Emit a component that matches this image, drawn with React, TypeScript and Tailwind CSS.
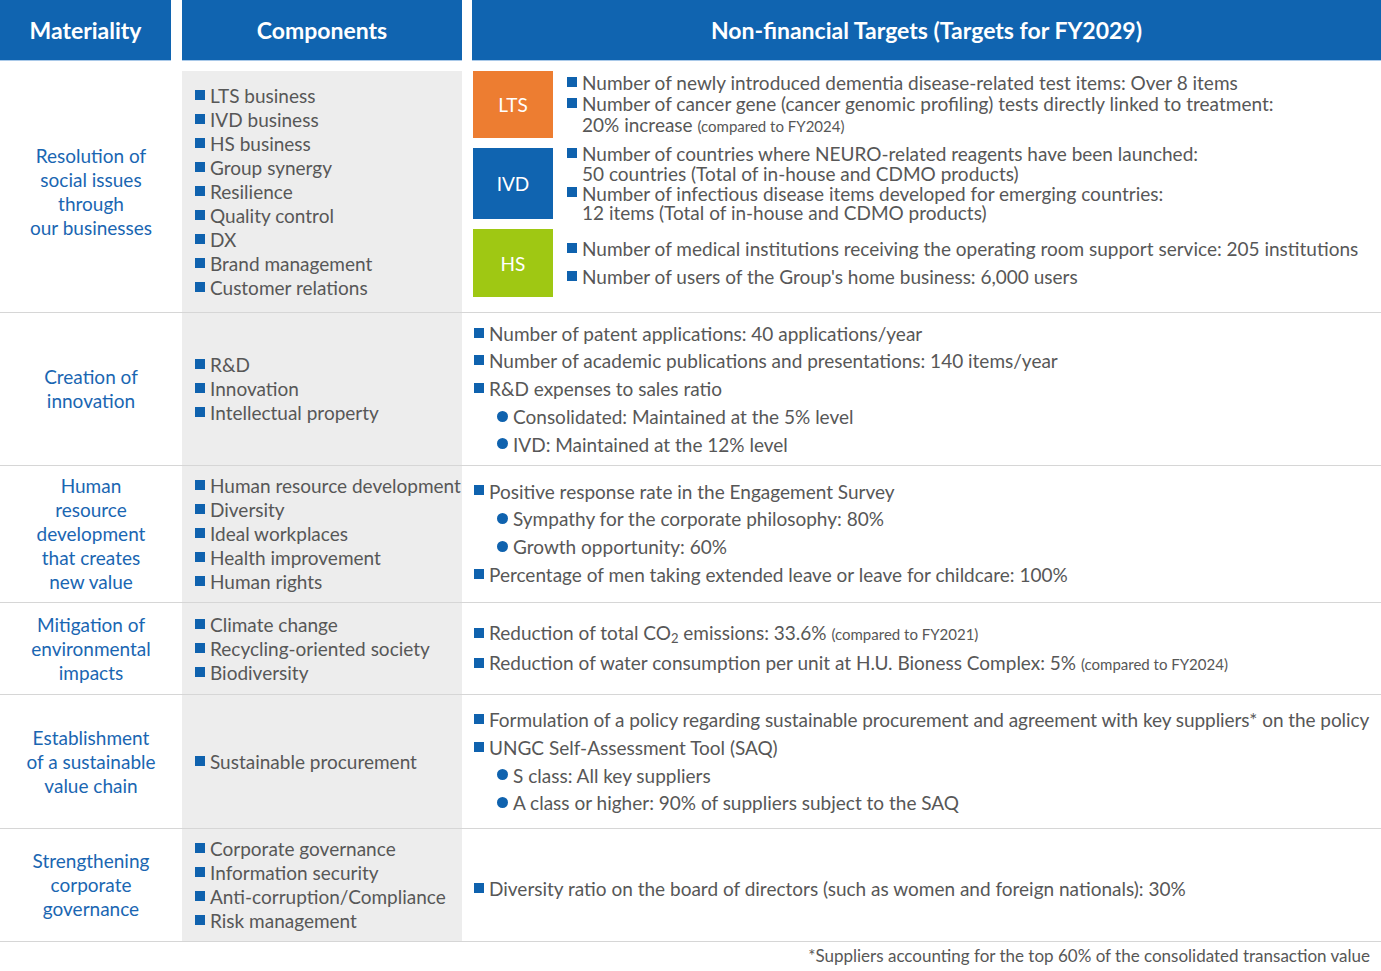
import React from "react";

const FONT = "font-['Lato','Open_Sans',sans-serif]";

function Sq() {
  return <span className="inline-block w-[10px] h-[10px] bg-[#0f62ae] mr-[5px] mb-[2px] shrink-0" />;
}

function Dot() {
  return <span className="inline-block w-[11px] h-[11px] rounded-full bg-[#0f62ae] mr-[5px] mb-[1px] shrink-0" />;
}

function Item({ children, sub = false }: { children: React.ReactNode; sub?: boolean }) {
  return (
    <div className={`flex items-center ${sub ? "pl-[23px]" : ""}`}>
      {sub ? <Dot /> : <Sq />}
      <span>{children}</span>
    </div>
  );
}

function Small({ children }: { children: React.ReactNode }) {
  return <span className="text-[15px]">{children}</span>;
}

function Components({ items }: { items: string[] }) {
  return (
    <div className="bg-[#ededed] h-full flex flex-col justify-center pl-[13px] leading-[24px]">
      {items.map((t) => (
        <div key={t} className="flex items-center">
          <Sq />
          <span>{t}</span>
        </div>
      ))}
    </div>
  );
}

function Row({
  h,
  title,
  items,
  right = "",
  children,
}: {
  h: string;
  title: string[];
  items: string[];
  right?: string;
  children: React.ReactNode;
}) {
  return (
    <div className={`grid grid-cols-[182px_280px_1fr] grid-rows-[minmax(0,1fr)] border-b border-[#d6d6d6] ${h}`}>
      <div className="flex flex-col items-center justify-center text-center text-[#1a66b2] leading-[24px]">
        {title.map((t) => (
          <div key={t}>{t}</div>
        ))}
      </div>
      <Components items={items} />
      <div className={`flex flex-col justify-center pl-[12px] leading-[27.7px] ${right}`}>{children}</div>
    </div>
  );
}

function Tag({ label, color, h, children }: { label: string; color: string; h: string; children: React.ReactNode }) {
  return (
    <div className={`flex items-center ${h}`}>
      <div className={`w-[80px] h-full ${color} text-white flex items-center justify-center text-[19px] shrink-0`}>
        {label}
      </div>
      <div className="pl-[14px] flex flex-col">{children}</div>
    </div>
  );
}

export default function App() {
  return (
    <div className={`w-[1381px] h-[971px] bg-white text-[#575757] text-[19px] ${FONT}`}>
      <div className="grid grid-cols-[182px_280px_1fr] h-[61px] text-white font-bold text-[23px]">
        <div className="w-[171px] bg-[#1064b0] border-b border-[#a9c9e9] flex items-center justify-center">
          Materiality
        </div>
        <div className="bg-[#1064b0] border-b border-[#a9c9e9] flex items-center justify-center">Components</div>
        <div className="ml-[10px] bg-[#1064b0] border-b border-[#a9c9e9] flex items-center justify-center">
          Non-financial Targets (Targets for FY2029)
        </div>
      </div>
      <div className="h-[10px]" />

      <Row
        h="h-[242px]"
        title={["Resolution of", "social issues", "through", "our businesses"]}
        items={[
          "LTS business",
          "IVD business",
          "HS business",
          "Group synergy",
          "Resilience",
          "Quality control",
          "DX",
          "Brand management",
          "Customer relations",
        ]}
        right="!justify-start"
      >
        <div className="flex flex-col gap-[10px] ml-[-1px] leading-[21px]">
          <Tag label="LTS" color="bg-[#ed7d31]" h="h-[67px]">
            <Item>Number of newly introduced dementia disease-related test items: Over 8 items</Item>
            <Item>Number of cancer gene (cancer genomic profiling) tests directly linked to treatment:</Item>
            <div className="pl-[15px]">
              20% increase <Small>(compared to FY2024)</Small>
            </div>
          </Tag>
          <Tag label="IVD" color="bg-[#1064b0]" h="h-[71px]">
            <div className="leading-[19.7px]">
              <Item>Number of countries where NEURO-related reagents have been launched:</Item>
              <div className="pl-[15px]">50 countries (Total of in-house and CDMO products)</div>
              <Item>Number of infectious disease items developed for emerging countries:</Item>
              <div className="pl-[15px]">12 items (Total of in-house and CDMO products)</div>
            </div>
          </Tag>
          <Tag label="HS" color="bg-[#9fc813]" h="h-[68px]">
            <div className="leading-[28px]">
              <Item>Number of medical institutions receiving the operating room support service: 205 institutions</Item>
              <Item>Number of users of the Group's home business: 6,000 users</Item>
            </div>
          </Tag>
        </div>
      </Row>

      <Row h="h-[153px]" title={["Creation of", "innovation"]} items={["R&D", "Innovation", "Intellectual property"]}>
        <Item>Number of patent applications: 40 applications/year</Item>
        <Item>Number of academic publications and presentations: 140 items/year</Item>
        <Item>R&D expenses to sales ratio</Item>
        <Item sub>Consolidated: Maintained at the 5% level</Item>
        <Item sub>IVD: Maintained at the 12% level</Item>
      </Row>

      <Row
        h="h-[137px]"
        title={["Human", "resource", "development", "that creates", "new value"]}
        items={["Human resource development", "Diversity", "Ideal workplaces", "Health improvement", "Human rights"]}
        right="pb-[2px]"
      >
        <Item>Positive response rate in the Engagement Survey</Item>
        <Item sub>Sympathy for the corporate philosophy: 80%</Item>
        <Item sub>Growth opportunity: 60%</Item>
        <Item>Percentage of men taking extended leave or leave for childcare: 100%</Item>
      </Row>

      <Row
        h="h-[92px]"
        title={["Mitigation of", "environmental", "impacts"]}
        items={["Climate change", "Recycling-oriented society", "Biodiversity"]}
        right="pt-[1px]"
      >
        <Item>
          Reduction of total CO<sub className="text-[13px] align-baseline relative top-[3px]">2</sub> emissions: 33.6%{" "}
          <Small>(compared to FY2021)</Small>
        </Item>
        <Item>
          Reduction of water consumption per unit at H.U. Bioness Complex: 5% <Small>(compared to FY2024)</Small>
        </Item>
      </Row>

      <Row
        h="h-[134px]"
        title={["Establishment", "of a sustainable", "value chain"]}
        items={["Sustainable procurement"]}
      >
        <Item>
          <span className="tracking-[-0.06px]">
            Formulation of a policy regarding sustainable procurement and agreement with key suppliers* on the policy
          </span>
        </Item>
        <Item>UNGC Self-Assessment Tool (SAQ)</Item>
        <Item sub>S class: All key suppliers</Item>
        <Item sub>A class or higher: 90% of suppliers subject to the SAQ</Item>
      </Row>

      <Row
        h="h-[113px]"
        title={["Strengthening", "corporate", "governance"]}
        items={["Corporate governance", "Information security", "Anti-corruption/Compliance", "Risk management"]}
        right="pt-[8px]"
      >
        <Item>Diversity ratio on the board of directors (such as women and foreign nationals): 30%</Item>
      </Row>

      <div className="text-right pr-[11px] pt-[1px] text-[17px]">
        *Suppliers accounting for the top 60% of the consolidated transaction value
      </div>
    </div>
  );
}
